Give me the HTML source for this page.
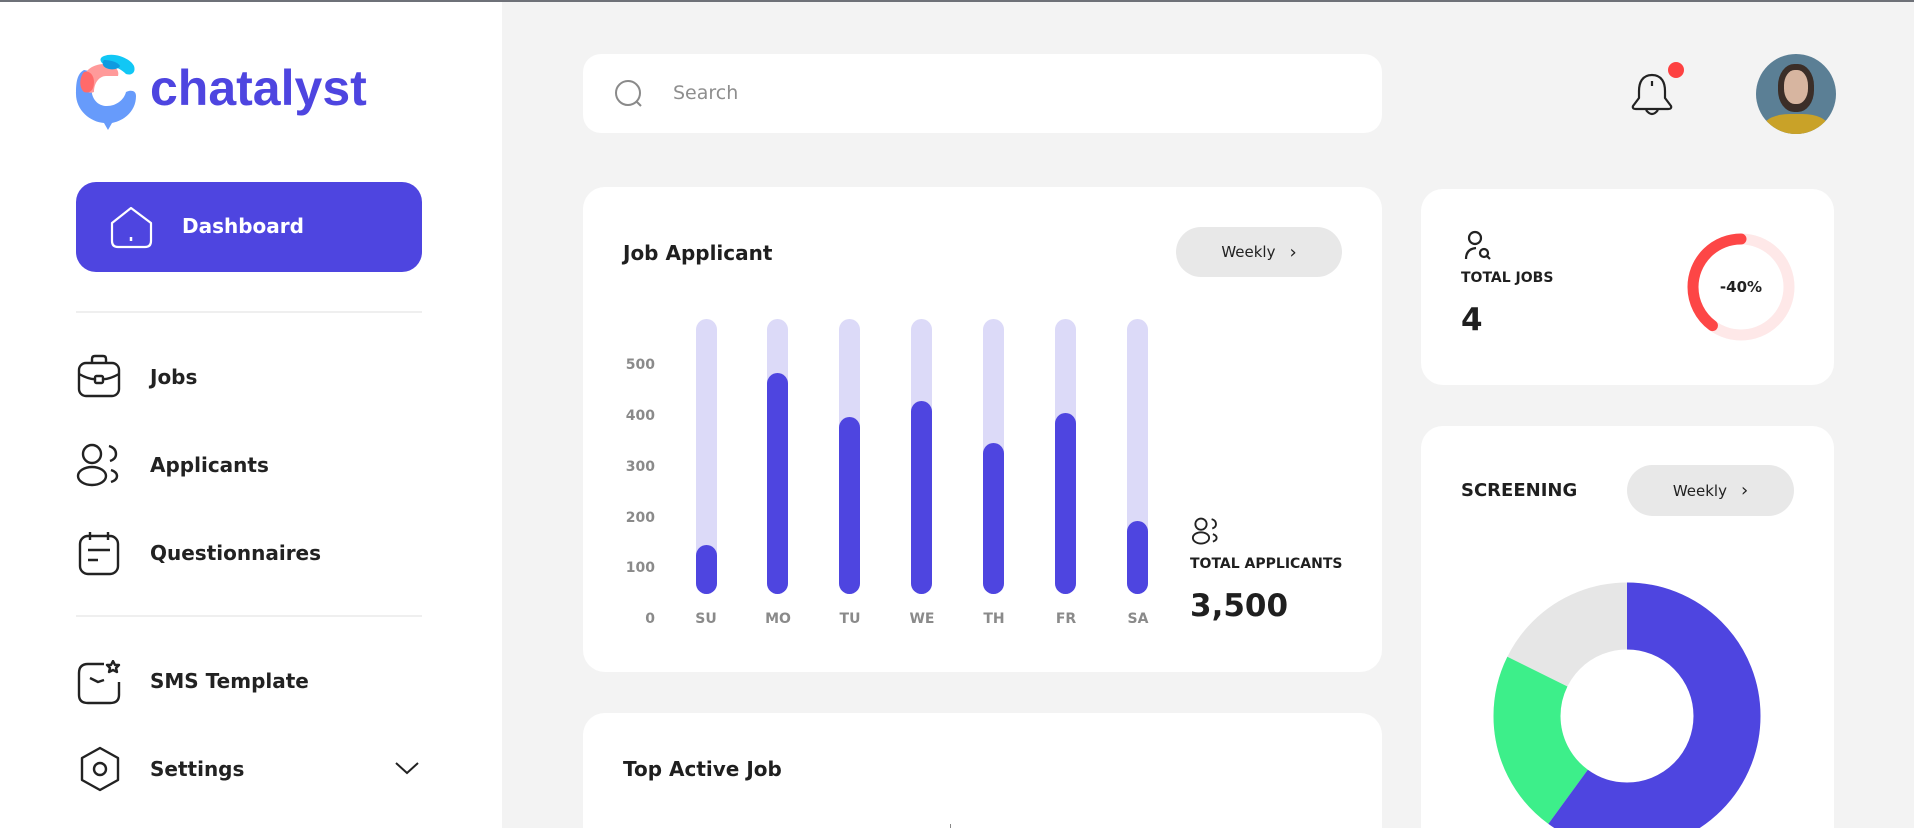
<!DOCTYPE html>
<html><head><meta charset="utf-8"><style>
*{margin:0;padding:0;box-sizing:border-box}
html,body{width:1914px;height:828px;overflow:hidden;background:#f3f3f3}
#w{position:relative;width:1914px;height:828px;overflow:hidden;background:#f3f3f3;font-family:"DejaVu Sans","Liberation Sans",sans-serif;color:#1f1f1f}
.abs{position:absolute}
.side{left:0;top:0;width:502px;height:828px;background:#fff}
.topline{left:0;top:0;width:1914px;height:2px;background:#6e7178;z-index:5}
.nav{left:150px;font-size:20px;font-weight:bold;color:#222;line-height:26px}
.card{background:#fff;border-radius:22px}
.pill{background:#e8e8e8;border-radius:26px;font-size:15px;color:#222;display:flex;align-items:center;justify-content:center;gap:14px}
.yl{width:40px;text-align:right;font-size:14px;color:#8a8a8a;font-weight:bold;left:615px}
.dl{font-size:14px;color:#8a8a8a;font-weight:bold;width:40px;text-align:center;top:611px}
.track{width:21px;top:319px;height:275px;background:#dcdaf8;border-radius:11px}
.fill{width:21px;bottom:234px;background:#4e45e0;border-radius:11px}
</style></head><body><div id="w">
<div class="abs topline"></div>
<div class="abs side"></div>
<svg class="abs" style="left:74px;top:52px" width="66" height="78" viewBox="0 0 66 78">
<path d="M10 18 C2 22 2 34 2 42 C2 58 16 70 30 71 L34 78 L38 71 C52 68 62 58 62 44 C62 38 56 38 52 40 C50 48 42 54 33 54 C22 54 16 44 18 34 C20 26 26 22 30 22 Z" fill="#679bfb"/>
<path d="M8 32 C8 20 18 12 30 12 C40 12 46 18 44 24 L32 24 C26 24 20 30 20 40 C16 42 10 40 8 32Z" fill="#ff9a9a"/>
<path d="M10 20 C5 26 5 36 10 40 C16 42 20 38 20 30 C20 24 16 18 10 20Z" fill="#ff6a6a"/>
<path d="M30 4 C40 0 56 6 60 14 C62 20 58 24 52 22 C48 18 42 14 34 14 C26 12 24 6 30 4Z" fill="#11c7f5"/>
<path d="M30 8 C36 8 44 10 46 14 C44 18 36 18 32 16 C28 14 28 10 30 8Z" fill="#0f9be0"/>
</svg>
<div class="abs" style="left:150px;top:58px;font-size:50px;font-weight:bold;color:#4e45e0;line-height:60px;font-family:'Liberation Sans',sans-serif">chatalyst</div>
<div class="abs" style="left:76px;top:182px;width:346px;height:90px;background:#4e45e0;border-radius:20px"></div>
<svg class="abs" style="left:109px;top:205px" width="45" height="44" viewBox="0 0 45 44"><path d="M3 18 L22 3 L42 18 V36 Q42 42 36 42 H9 Q3 42 3 36Z" fill="none" stroke="#fff" stroke-width="2.2" stroke-linejoin="round"/><path d="M22 32 V36" stroke="#fff" stroke-width="2.5"/></svg>
<div class="abs" style="left:182px;top:214px;font-size:20px;font-weight:bold;color:#fff">Dashboard</div>
<div class="abs" style="left:76px;top:311px;width:346px;height:2px;background:#efefef"></div>
<div class="abs" style="left:76px;top:615px;width:346px;height:2px;background:#efefef"></div>
<svg class="abs" style="left:76px;top:353px" width="48" height="48" viewBox="0 0 48 48" fill="none" stroke="#222" stroke-width="2.4" stroke-linejoin="round"><rect x="3" y="10" width="40" height="33" rx="7"/><path d="M16 10 V6 Q16 3 19 3 H27 Q30 3 30 6 V10"/><path d="M3 21 Q14 27 20 26 M26 26 Q32 27 43 21"/><rect x="19" y="23" width="8" height="7" rx="1.5"/></svg>
<div class="abs nav" style="top:364px">Jobs</div>
<svg class="abs" style="left:76px;top:441px" width="48" height="48" viewBox="0 0 48 48" fill="none" stroke="#222" stroke-width="2.4"><circle cx="16" cy="13" r="9"/><ellipse cx="16" cy="35" rx="14" ry="9"/><path d="M33 5 Q40 7 40 13 Q40 18 34 20"/><path d="M35 29 Q41 31 41 35 Q41 39 35 41"/></svg>
<div class="abs nav" style="top:452px">Applicants</div>
<svg class="abs" style="left:76px;top:530px" width="48" height="48" viewBox="0 0 48 48" fill="none" stroke="#222" stroke-width="2.4"><rect x="4" y="6" width="38" height="38" rx="8"/><path d="M14 2 V10 M32 2 V10 M12 20 H34 M12 30 H22"/></svg>
<div class="abs nav" style="top:540px">Questionnaires</div>
<svg class="abs" style="left:76px;top:660px" width="48" height="48" viewBox="0 0 48 48" fill="none" stroke="#222" stroke-width="2.4" stroke-linejoin="round"><path d="M28 4 H12 Q3 4 3 13 V35 Q3 43 12 43 H34 Q43 43 43 35 V22"/><path d="M14 18 L22 22 L28 20"/><path d="M37 1 L39 5 L43 5 L40 8 L41 12 L37 10 L33 12 L34 8 L31 5 L35 5Z"/></svg>
<div class="abs nav" style="top:668px">SMS Template</div>
<svg class="abs" style="left:76px;top:745px" width="48" height="48" viewBox="0 0 48 48" fill="none" stroke="#222" stroke-width="2.4" stroke-linejoin="round"><path d="M24 3 L42 13 V35 L24 45 L6 35 V13Z"/><circle cx="24" cy="24" r="6"/></svg>
<div class="abs nav" style="top:756px">Settings</div>
<svg class="abs" style="left:394px;top:760px" width="26" height="16" viewBox="0 0 26 16"><path d="M2 3 L13 13 L24 3" fill="none" stroke="#222" stroke-width="2"/></svg>
<div class="abs card" style="left:583px;top:54px;width:799px;height:79px;border-radius:18px"></div>
<svg class="abs" style="left:614px;top:79px" width="32" height="32" viewBox="0 0 32 32" fill="none" stroke="#8a8a8a" stroke-width="2"><circle cx="14" cy="14" r="12"/><path d="M23 23 L27 27"/></svg>
<div class="abs" style="left:673px;top:82px;font-size:19px;color:#8e8e8e">Search</div>
<svg class="abs" style="left:1630px;top:70px" width="44" height="48" viewBox="0 0 44 48" fill="none" stroke="#222" stroke-width="2.2" stroke-linejoin="round"><path d="M22 5 C12 5 9 13 9 21 V28 L3 36 Q2 39 6 39 H38 Q42 39 41 36 L35 28 V21 C35 13 32 5 22 5Z"/><path d="M22 11 V16"/><path d="M16 40 Q22 48 28 40"/></svg>
<div class="abs" style="left:1668px;top:62px;width:16px;height:16px;border-radius:50%;background:#fd4141"></div>
<div class="abs" style="left:1756px;top:54px;width:80px;height:80px;border-radius:50%;background:#5b7f95;overflow:hidden">
<div style="position:absolute;left:22px;top:10px;width:36px;height:48px;border-radius:45%;background:#3b2e28"></div>
<div style="position:absolute;left:28px;top:16px;width:24px;height:34px;border-radius:45%;background:#d7b5a0"></div>
<div style="position:absolute;left:8px;top:60px;width:64px;height:30px;border-radius:40% 40% 0 0;background:#c9a228"></div></div>
<div class="abs card" style="left:583px;top:187px;width:799px;height:485px"></div>
<div class="abs" style="left:623px;top:241px;font-size:20px;font-weight:bold">Job Applicant</div>
<div class="abs pill" style="left:1176px;top:227px;width:166px;height:50px">Weekly <span style="font-size:18px">›</span></div>
<div class="abs yl" style="top:357px">500</div>
<div class="abs yl" style="top:408px">400</div>
<div class="abs yl" style="top:459px">300</div>
<div class="abs yl" style="top:510px">200</div>
<div class="abs yl" style="top:560px">100</div>
<div class="abs yl" style="top:611px">0</div>
<div class="abs track" style="left:696px"></div><div class="abs fill" style="left:696px;top:545px"></div>
<div class="abs track" style="left:767px"></div><div class="abs fill" style="left:767px;top:373px"></div>
<div class="abs track" style="left:839px"></div><div class="abs fill" style="left:839px;top:417px"></div>
<div class="abs track" style="left:911px"></div><div class="abs fill" style="left:911px;top:401px"></div>
<div class="abs track" style="left:983px"></div><div class="abs fill" style="left:983px;top:443px"></div>
<div class="abs track" style="left:1055px"></div><div class="abs fill" style="left:1055px;top:413px"></div>
<div class="abs track" style="left:1127px"></div><div class="abs fill" style="left:1127px;top:521px"></div>
<div class="abs dl" style="left:686px">SU</div><div class="abs dl" style="left:758px">MO</div><div class="abs dl" style="left:830px">TU</div><div class="abs dl" style="left:902px">WE</div><div class="abs dl" style="left:974px">TH</div><div class="abs dl" style="left:1046px">FR</div><div class="abs dl" style="left:1118px">SA</div>
<svg class="abs" style="left:1191px;top:516px" width="30" height="30" viewBox="0 0 48 48" fill="none" stroke="#222" stroke-width="3"><circle cx="16" cy="13" r="9"/><ellipse cx="16" cy="35" rx="13" ry="9"/><path d="M33 5 Q40 7 40 13 Q40 18 34 20"/><path d="M35 29 Q41 31 41 35 Q41 39 35 41"/></svg>
<div class="abs" style="left:1190px;top:556px;font-size:14px;font-weight:bold">TOTAL APPLICANTS</div>
<div class="abs" style="left:1190px;top:588px;font-size:31px;font-weight:bold">3,500</div>
<div class="abs card" style="left:583px;top:713px;width:799px;height:140px"></div>
<div class="abs" style="left:623px;top:757px;font-size:20px;font-weight:bold">Top Active Job</div>
<div class="abs" style="left:950px;top:824px;width:1px;height:4px;background:#888"></div>
<div class="abs card" style="left:1421px;top:189px;width:413px;height:196px"></div>
<svg class="abs" style="left:1462px;top:229px" width="32" height="32" viewBox="0 0 32 32" fill="none" stroke="#222" stroke-width="2.2"><circle cx="13" cy="9" r="6"/><path d="M4 30 Q4 20 14 19"/><circle cx="22" cy="24" r="4"/><path d="M25 27 L28 30"/></svg>
<div class="abs" style="left:1461px;top:270px;font-size:14px;font-weight:bold">TOTAL JOBS</div>
<div class="abs" style="left:1461px;top:302px;font-size:31px;font-weight:bold">4</div>
<svg class="abs" style="left:1683px;top:229px" width="116" height="116" viewBox="0 0 116 116"><circle cx="58" cy="58" r="48" fill="none" stroke="#fee8e8" stroke-width="11"/><circle cx="58" cy="58" r="48" fill="none" stroke="#fd4646" stroke-width="11" stroke-linecap="round" stroke-dasharray="120 400" transform="rotate(-90 58 58) scale(1 -1) translate(0 -116)"/><text x="58" y="63" text-anchor="middle" font-family="DejaVu Sans" font-weight="bold" font-size="15" fill="#222">-40%</text></svg>
<div class="abs card" style="left:1421px;top:426px;width:413px;height:430px"></div>
<div class="abs" style="left:1461px;top:480px;font-size:18px;font-weight:bold">SCREENING</div>
<div class="abs pill" style="left:1627px;top:465px;width:167px;height:51px">Weekly <span style="font-size:18px">›</span></div>
<svg class="abs" style="left:1493px;top:582px" width="268" height="268" viewBox="0 0 268 268"><g transform="rotate(-90 134 134)" fill="none" stroke-width="67"><circle cx="134" cy="134" r="100" stroke="#e6e6e6"/><circle cx="134" cy="134" r="100" stroke="#3def8a" stroke-dasharray="0 377 140 200"/><circle cx="134" cy="134" r="100" stroke="#4e45e0" stroke-dasharray="377 400"/></g></svg>
</div></body></html>
